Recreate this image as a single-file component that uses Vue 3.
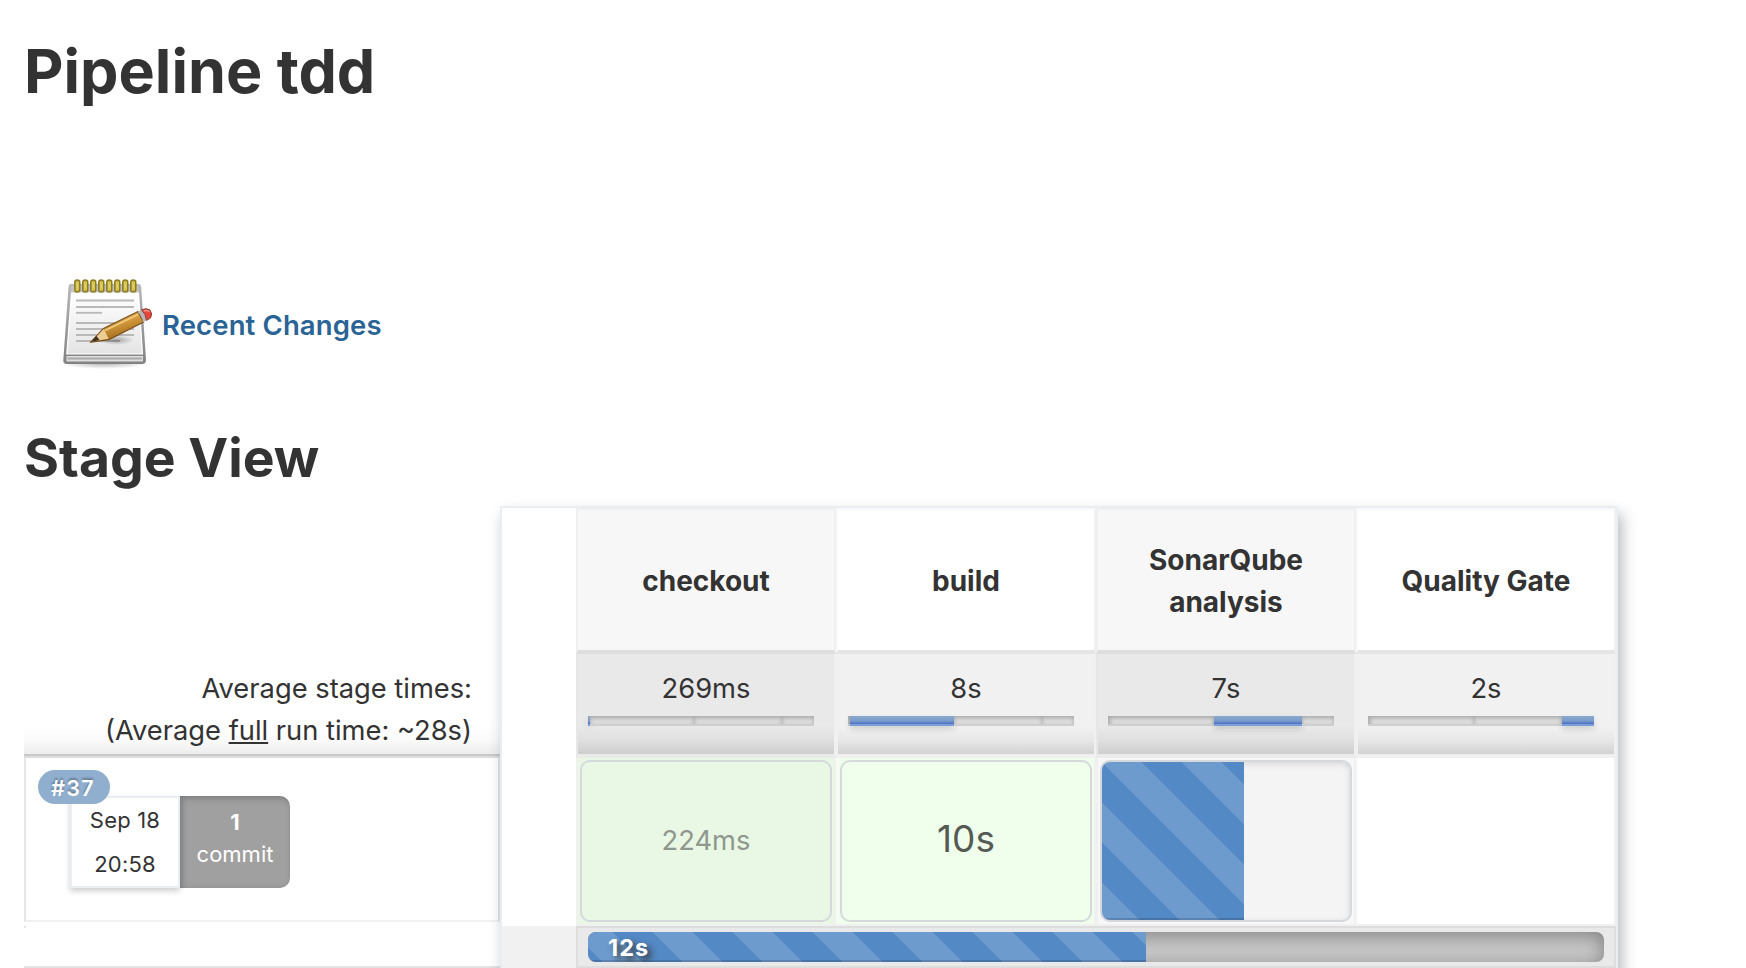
<script setup>
const segments = [2, 104, 88, 32]
const stages = [
  { name: 'checkout', avg: '269ms', active: 0 },
  { name: 'build', avg: '8s', active: 1 },
  { name: 'SonarQube analysis', avg: '7s', active: 2 },
  { name: 'Quality Gate', avg: '2s', active: 3 }
]
const noteLines = [[35.5, 84], [42, 84], [47.8, 52], [58, 84], [64, 84], [70, 84], [76, 70]]
</script>

<template>
  <main class="page">
    <h1>Pipeline tdd</h1>
    <div class="recent">
      <svg class="notepad" width="106" height="110" viewBox="0 0 106 110">
        <defs>
          <linearGradient id="paper" x1="0" y1="0" x2="0" y2="1">
            <stop offset="0" stop-color="#fff" />
            <stop offset="1" stop-color="#e4e4e4" />
          </linearGradient>
          <linearGradient id="back" x1="0" y1="0" x2="0" y2="1">
            <stop offset="0" stop-color="#b9b9b9" />
            <stop offset="1" stop-color="#818181" />
          </linearGradient>
          <linearGradient id="wood" x1="0" y1="0" x2=".45" y2="1">
            <stop offset="0" stop-color="#e9b866" />
            <stop offset=".5" stop-color="#d59a3c" />
            <stop offset="1" stop-color="#9b651d" />
          </linearGradient>
          <radialGradient id="shade">
            <stop offset="0" stop-color="#000" stop-opacity=".3" />
            <stop offset="1" stop-color="#000" stop-opacity="0" />
          </radialGradient>
        </defs>
        <ellipse cx="54" cy="98" rx="44" ry="6" fill="url(#shade)" />
        <path d="M21 19H88Q91 19 91.200 22L96 95Q96 99 92 99H17Q13 99 13.300 95L18.500 22Q18.700 19 21 19Z" fill="url(#back)" />
        <path d="M21.500 21H88L89 28H20.500Z" fill="#c6c6c6" />
        <path d="M21.500 28H88.500L92.500 89H16.800Z" fill="url(#paper)" stroke="#fff" stroke-width="1.200" />
        <path d="M16.500 91H93V96.500H16.500Z" fill="#dedede" />
        <path d="M17.500 92.500H92V94.500H17.500Z" fill="#a9a9a9" />
        <path v-for="l in noteLines" :key="l[0]" :d="`M26 ${l[0]}H${l[1]}`" stroke="#b9b9b9" stroke-width="1.900" />
        <g v-for="n in 8" :key="n">
          <rect :x="16.800 + n * 8" y="15" width="5" height="12" rx="2.500" fill="#d3c14c" stroke="#8d7c22" stroke-width="1.500" />
          <path :d="`M${19.300 + n * 8} 18V24`" stroke="#e2d57a" stroke-width="1.200" />
        </g>
        <ellipse cx="66" cy="75" rx="18" ry="5" fill="url(#shade)" />
        <path d="M41 77L53.500 63.500L88 46.500L93.500 57L59 74.500Z" fill="url(#wood)" stroke="#7e531b" stroke-width="1.300" />
        <path d="M41.800 76.600L53.800 64L58.600 73.800Z" fill="#edcf96" />
        <path d="M41 77L46.500 71L49.500 75Z" fill="#3d3121" />
        <path d="M55 65.500L88 49.500" stroke="#f2cd84" stroke-width="1.500" />
        <path d="M87.500 46.700L92 44.500Q96 48.500 97 55L93 57.300Q92 51 87.500 46.700Z" fill="#b9b4b5" />
        <path d="M91.500 44.800Q96.500 42.500 100 45Q103 49 100.500 53L96.500 55.400Q96 49 91.500 44.800Z" fill="#e7443b" stroke="#8c4032" stroke-width="1" />
        <path d="M94 46Q97.500 44.500 99.500 47" stroke="#ff9186" stroke-width="1.500" fill="none" />
      </svg>
      <a>Recent Changes</a>
    </div>
    <h2>Stage View</h2>

    <section class="view">
      <aside class="builds">
        <div class="averages">
          <div>Average stage times:</div>
          <div>(Average <u>full</u> run time: ~28s)</div>
        </div>
        <div class="build">
          <div class="when">
            <span class="badge">#37</span>
            <div class="date">
              <span>Sep 18</span>
              <span>20:58</span>
            </div>
            <div class="commits">
              <b>1</b>
              <span>commit</span>
            </div>
          </div>
        </div>
        <div class="build-end"></div>
      </aside>

      <div class="panel">
        <div class="gutter"><div class="gutter-foot"></div></div>
        <div class="table">
          <div class="row">
            <div v-for="s in stages" :key="s.name" class="cell head">{{ s.name }}</div>
          </div>
          <div class="row">
            <div v-for="s in stages" :key="s.name" class="cell avg">
              {{ s.avg }}
              <div class="meter">
                <i v-for="(w, i) in segments" :key="i" :class="{ on: i === s.active }" :style="{ width: w + 'px' }"></i>
              </div>
            </div>
          </div>
          <div class="row">
            <div class="cell run ok"><div class="card faded">224ms</div></div>
            <div class="cell run ok"><div class="card large">10s</div></div>
            <div class="cell run"><div class="card running"><div class="fill stripes"></div></div></div>
            <div class="cell run"></div>
          </div>
          <div class="total">
            <div class="track"><div class="done stripes"><b>12s</b></div></div>
          </div>
        </div>
      </div>
    </section>
  </main>
</template>

<style>
body { background: #fff; overflow: hidden; }
</style>

<style scoped>
* { box-sizing: border-box; }
.page {
  width: 1746px;
  height: 968px;
  overflow: hidden;
  padding-left: 24px;
  font-family: Inter, "Liberation Sans", sans-serif;
  color: #333;
  font-size: 27.300px;
  line-height: 42px;
}
h1, h2 { margin: 0; font-weight: 700; white-space: nowrap; }
h1 { font-size: 61px; line-height: 80px; padding-top: 31px; }
h2 { font-size: 53.500px; line-height: 66px; margin-top: 50px; }
.recent { display: flex; align-items: center; height: 110px; margin: 154px 0 0 26px; }
.recent a {
  color: #2a6496;
  font-size: 27.500px;
  font-weight: 600;
  letter-spacing: .130px;
  margin: 10px 0 0 6px;
  white-space: nowrap;
}
.notepad { flex: none; }
.view { display: flex; margin-top: 15px; }
.builds { width: 476px; flex: none; }
.averages {
  margin-top: 140px;
  height: 110px;
  padding: 22px 28px 0 0;
  text-align: right;
  white-space: nowrap;
  border-bottom: 2px solid #c8c8c8;
  background: linear-gradient(rgba(255, 255, 255, 0) 72%, #fbfbfb 86%, #ededed);
}
.build {
  height: 164px;
  margin-top: 2px;
  border: 2px solid #e6e6e6;
  border-top: 0;
  border-bottom-color: #f1f1f1;
  box-shadow: 0 -2px #ddd;
  padding: 38px 0 0 44px;
}
.when { position: relative; display: flex; font-size: 22px; text-align: center; }
.date, .commits { width: 110px; height: 92px; display: flex; flex-direction: column; }
.date {
  border: 2px solid #e9eef2;
  line-height: 44px;
  letter-spacing: .2px;
  box-shadow: 0 3px 6px rgba(0, 0, 0, .2);
  background: #fff;
}
.commits {
  color: #fff;
  background: #a0a0a0;
  border-radius: 0 10px 10px 0;
  line-height: 32px;
  padding-top: 10px;
  box-shadow: inset 2px 2px 6px rgba(0, 0, 0, .25);
}
.badge {
  position: absolute;
  z-index: 1;
  left: -32px;
  top: -26px;
  width: 72px;
  height: 34px;
  padding-right: 2px;
  line-height: 36px;
  border-radius: 17px;
  background: #90aece;
  color: #fff;
  font-size: 21.500px;
  font-weight: 600;
  letter-spacing: 1.300px;
  text-shadow: 0 -2px 2px rgba(0, 0, 0, .3);
}
.build-end { height: 46px; border-bottom: 2px solid #e2e2e2; }
.build-end::before {
  content: "";
  display: block;
  width: 2px;
  height: 4px;
  border-bottom: 2px solid #e6e6e6;
}
.panel {
  position: relative;
  display: flex;
  width: 1118px;
  height: 480px;
  flex: none;
  border: 2px solid #e9eef2;
  background: #fff;
  box-shadow: 4px 8px 14px rgba(0, 0, 0, .28);
}
.gutter { width: 74px; padding-top: 418px; }
.gutter-foot { height: 58px; background: #f1f1f1; }
.table { width: 1040px; }
.row { display: flex; }
.cell { width: 260px; text-align: center; border: 2px solid #f0f0f0; }
.cell:nth-child(odd) { background: #f7f7f7; }
.cell:nth-child(even) { background: #fff; border-left-color: #f8f8f8; }
.head {
  height: 146px;
  padding: 2px 30px 0;
  display: flex;
  align-items: center;
  justify-content: center;
  font-size: 28px;
  font-weight: 700;
  border-bottom: 4px solid #dedede;
}
.cell.head:nth-child(even) { border-bottom-color: #e5e5e5; border-top-color: #f8f8f8; }
.cell.avg {
  height: 104px;
  padding: 14px 10px 0;
  border-top: 0;
  border-bottom: 4px solid #ebebeb;
  border-left-color: #e7e7e7;
  background: linear-gradient(#e9e9e9 72%, #e0e0e0 86%, #cecece);
}
.cell.avg:nth-child(even) {
  border-color: #f0f0f0;
  background: linear-gradient(#f1f1f1 72%, #e8e8e8 86%, #d2d2d2);
}
.meter { display: flex; width: 226px; height: 10px; margin-top: 6px; }
.meter i { background: #dedede; border-bottom: 2px solid #cfcfcf; box-shadow: inset 0 2px 4px rgba(0, 0, 0, .25); }
.meter i.on {
  background: linear-gradient(#8aa9d0, #7a9ccb 60%, #4a6fc3);
  border-bottom-color: #7b9fdc;
  box-shadow: 0 3px 6px rgba(0, 0, 0, .14);
}
.run { height: 168px; border-top: 0; padding: 2px; }
.cell.run.ok { background: #f0ffec; }
.cell.run.ok:first-child { background: #e9f7e5; }
.card {
  height: 162px;
  border: 2px solid #d5d9dc;
  border-radius: 10px;
  display: flex;
  align-items: center;
  justify-content: center;
}
.faded { color: #8f988d; padding-bottom: 1px; }
.large { font-size: 37px; color: #555a54; padding-bottom: 4px; }
.running { justify-content: flex-start; overflow: hidden; background: #f4f4f4; box-shadow: inset 0 2px 6px rgba(0, 0, 0, .12); }
.stripes {
  background-color: #5389c5;
  background-image: linear-gradient(45deg, rgba(255, 255, 255, .15) 25%, transparent 25%, transparent 50%, rgba(255, 255, 255, .15) 50%, rgba(255, 255, 255, .15) 75%, transparent 75%);
  background-size: 80px 80px;
  box-shadow: inset 0 -2px rgba(0, 0, 0, .15);
}
.fill { width: 142px; height: 158px; }
.total { height: 42px; border: 2px solid #ddd; background: #e9e9e9; padding: 4px 10px; }
.track {
  height: 30px;
  border-radius: 8px;
  overflow: hidden;
  background: #cbcbcb;
  box-shadow: inset 0 4px 20px rgba(0, 0, 0, .37);
}
.done {
  width: 558px;
  height: 30px;
  padding-left: 20px;
  line-height: 32px;
  color: #fff;
  font-size: 23.500px;
  letter-spacing: 1px;
  background-position: -15px 0;
  text-shadow: 4px 4px 6px #333;
}
</style>
